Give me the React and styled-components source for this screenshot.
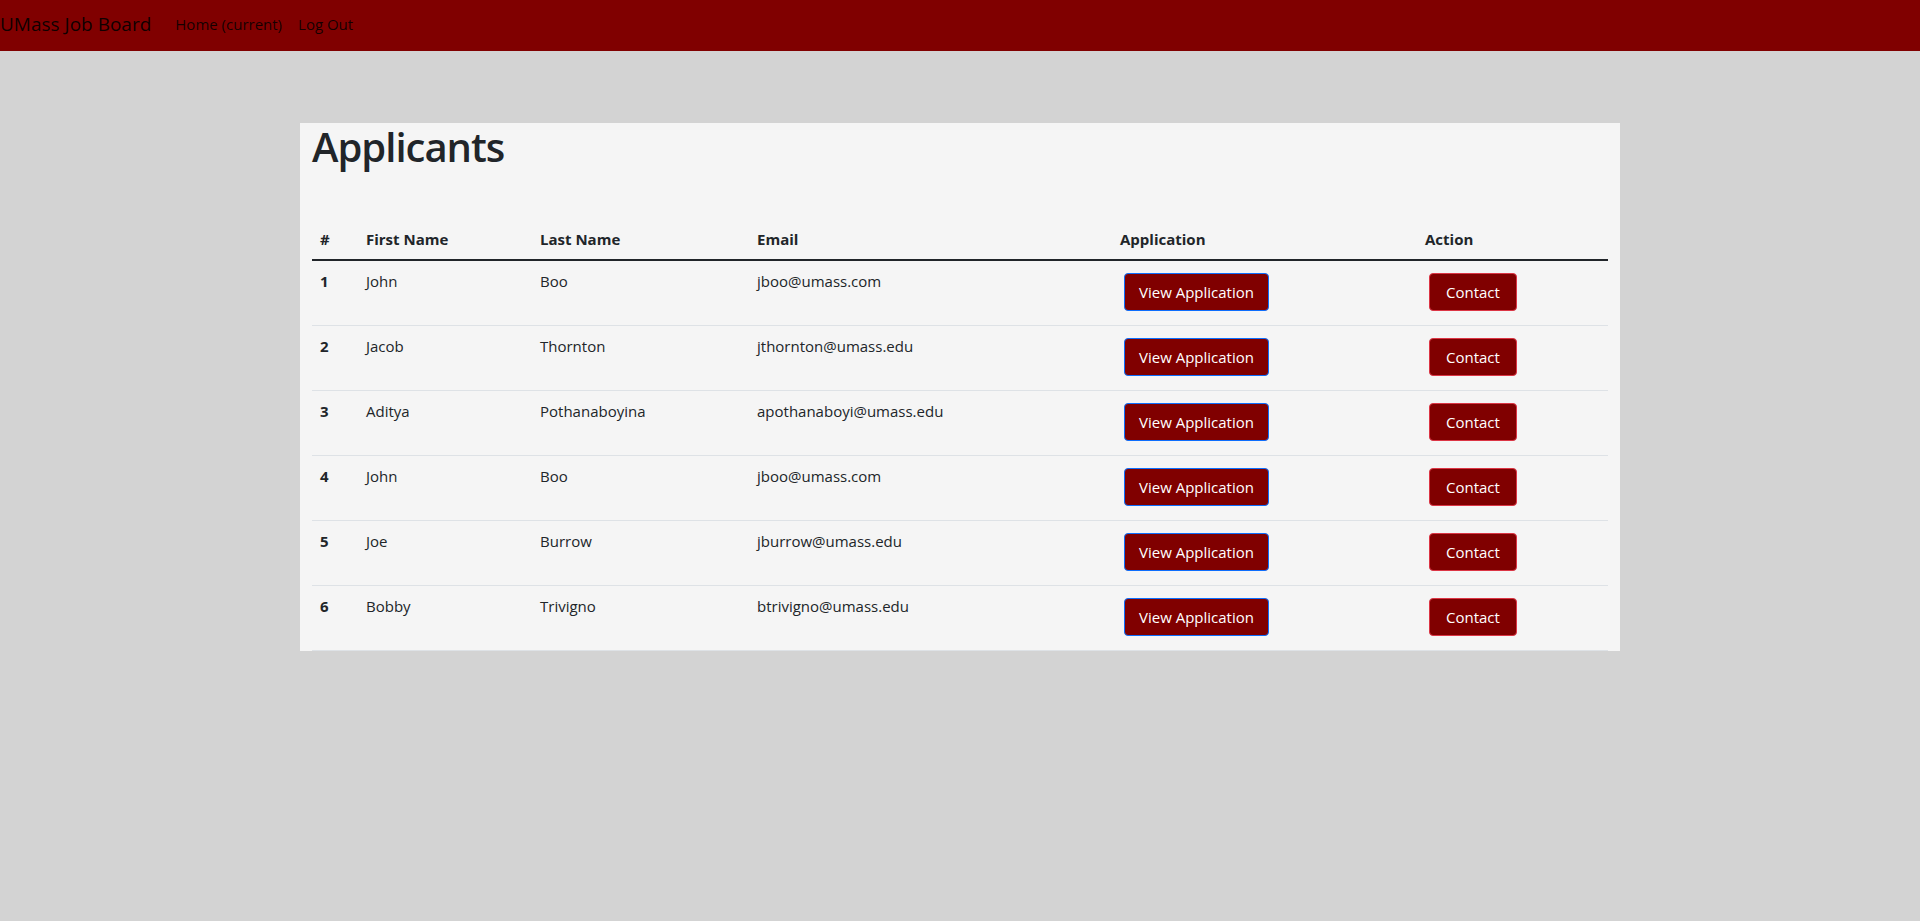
import React from 'react';
import styled, { createGlobalStyle } from 'styled-components';

const GlobalStyle = createGlobalStyle`
    * {
        box-sizing: border-box;
    }
    body {
        margin: 0;
        background-color: #d3d3d3;
        font-family: "Open Sans", "Noto Sans", sans-serif;
        font-size: 15px;
        line-height: 24px;
        color: #212529;
    }
`;

const applicants = [
    { id: 1, first: 'John', last: 'Boo', email: 'jboo@umass.com' },
    { id: 2, first: 'Jacob', last: 'Thornton', email: 'jthornton@umass.edu' },
    { id: 3, first: 'Aditya', last: 'Pothanaboyina', email: 'apothanaboyi@umass.edu' },
    { id: 4, first: 'John', last: 'Boo', email: 'jboo@umass.com' },
    { id: 5, first: 'Joe', last: 'Burrow', email: 'jburrow@umass.edu' },
    { id: 6, first: 'Bobby', last: 'Trivigno', email: 'btrivigno@umass.edu' },
];

const columns = [
    { label: '#', width: 46 },
    { label: 'First Name', width: 174 },
    { label: 'Last Name', width: 217 },
    { label: 'Email', width: 363 },
    { label: 'Application', width: 305 },
    { label: 'Action', width: 191 },
];

export default function App() {
    return (
        <>
            <GlobalStyle />
            <NavBar>
                <Brand href="#">UMass Job Board</Brand>
                <NavLinks>
                    <NavLink href="#">Home (current)</NavLink>
                    <NavLink href="#">Log Out</NavLink>
                </NavLinks>
            </NavBar>
            <Container>
                <Title>Applicants</Title>
                <Table>
                    <colgroup>
                        {columns.map(col => (
                            <col key={col.label} style={{ width: col.width }} />
                        ))}
                    </colgroup>
                    <thead>
                        <tr>
                            {columns.map(col => (
                                <HeadCell key={col.label}>{col.label}</HeadCell>
                            ))}
                        </tr>
                    </thead>
                    <Body>
                        {applicants.map(a => (
                            <tr key={a.id}>
                                <RowHead scope="row">{a.id}</RowHead>
                                <Cell>{a.first}</Cell>
                                <Cell>{a.last}</Cell>
                                <Cell>{a.email}</Cell>
                                <Cell>
                                    <MaroonButton $border="#0d6efd" $padX={14}>View Application</MaroonButton>
                                </Cell>
                                <Cell>
                                    <MaroonButton $border="#dc3545" $padX={16}>Contact</MaroonButton>
                                </Cell>
                            </tr>
                        ))}
                    </Body>
                </Table>
            </Container>
        </>
    );
}

const NavBar = styled.nav`
    height: 51px;
    display: flex;
    align-items: center;
    padding-bottom: 4px;
    background-color: #800000;
`;

const Brand = styled.a`
    font-size: 19px;
    line-height: 30px;
    color: rgba(0, 0, 0, 0.9);
    text-decoration: none;
    margin-right: 16px;
    white-space: nowrap;
`;

const NavLinks = styled.div`
    display: flex;
    align-items: center;
`;

const NavLink = styled.a`
    padding: 8px;
    color: rgba(0, 0, 0, 0.85);
    text-decoration: none;
    white-space: nowrap;
`;

const Container = styled.main`
    width: 1320px;
    margin: 72px auto 0;
    padding: 0 12px;
    background-color: #f5f5f5;
`;

const Title = styled.h1`
    margin: 0;
    font-size: 40px;
    font-weight: 600;
    letter-spacing: -1px;
    line-height: 48px;
`;

const Table = styled.table`
    width: 100%;
    margin-top: 48px;
    border-collapse: collapse;
    table-layout: fixed;
    color: #212529;
`;

const HeadCell = styled.th`
    padding: 8px;
    text-align: left;
    font-weight: 700;
    vertical-align: bottom;
    border-bottom: 1px solid #dee2e6;
`;

const Body = styled.tbody`
    border-top: 2px solid #212529;

    tr {
        border-bottom: 1px solid #dee2e6;
    }
`;

const RowHead = styled.th`
    padding: 8px 8px 10px;
    text-align: left;
    font-weight: 700;
    vertical-align: top;
`;

const Cell = styled.td`
    padding: 8px 8px 10px;
    vertical-align: top;
    white-space: nowrap;
`;

const MaroonButton = styled.button`
    display: inline-block;
    margin: 4px;
    padding: 6px ${p => p.$padX || 12}px;
    font-family: inherit;
    font-size: 15px;
    line-height: 24px;
    color: #fff;
    background-color: #800000;
    border: 1px solid ${p => p.$border};
    border-radius: 4px;
    cursor: pointer;
`;
